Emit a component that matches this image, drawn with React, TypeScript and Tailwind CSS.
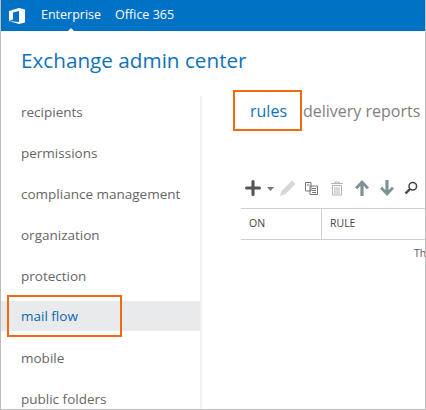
import { Plus } from 'lucide-react';

const navItems = ['recipients', 'permissions', 'compliance management', 'organization', 'protection', 'mail flow', 'mobile', 'public folders'];

function OfficeLogo() {
  return (
    <svg width="16" height="16" viewBox="0 0 16 16" fill="#fff">
      <path d="M0 3 10 0 16 1.5V14.5L10 16 0 13 10 14V3L4 4.5V11.5L0 13Z" />
    </svg>
  );
}

function Toolbar() {
  return (
    <div className="flex h-[20px] items-center pl-[1px]">
      <Plus size={22} strokeWidth={3.4} className="text-[#555]" />
      <svg width="7" height="4" viewBox="0 0 7 4" className="mt-[2px] ml-[3px]" fill="#777">
        <path d="M0 0H7L3.5 4Z" />
      </svg>
      <svg width="18" height="18" viewBox="0 0 18 18" className="ml-[5px]" fill="#d8d8d8">
        <path d="M13 1.5 16.5 5 6 15.5 1 17 2.5 12Z" />
      </svg>
      <svg width="15" height="15" viewBox="0 0 15 15" className="ml-[7px]" fill="none" stroke="#777" strokeWidth="1">
        <path d="M1.5 1.5H7V10H1.5ZM6 5H13.5V13.5H6Z" fill="#fff" />
        <path d="M8 7.5H12M8 9.5H12M8 11.5H12M3 4H5.5" />
      </svg>
      <svg width="14" height="15" viewBox="0 0 14 15" className="ml-[11px]" fill="none" stroke="#b5b5b5" strokeWidth="1">
        <path d="M1 2.5H13M5 2.5V1H9V2.5M2.5 4.5H11.5V14H2.5ZM5 6V13M7 6V13M9 6V13" />
      </svg>
      <svg width="14" height="16" viewBox="0 0 14 16" className="ml-[11px]" fill="#7d9197">
        <path d="M7 0 14 7.5 11.8 9.2 8.6 5.8V16H5.4V5.8L2.2 9.2 0 7.5Z" />
      </svg>
      <svg width="14" height="16" viewBox="0 0 14 16" className="ml-[11px]" fill="#7d9197">
        <path d="M7 16 14 8.5 11.8 6.8 8.6 10.2V0H5.4V10.2L2.2 6.8 0 8.5Z" />
      </svg>
      <svg width="14" height="14" viewBox="0 0 14 14" className="ml-[10px]" fill="none" stroke="#444">
        <circle cx="8.8" cy="5.2" r="3.8" strokeWidth="1.5" />
        <path d="M6 8 1.5 12.5" strokeWidth="2.4" />
      </svg>
    </div>
  );
}

export default function App() {
  return (
    <div className="relative flex h-[410px] w-[426px] flex-col overflow-hidden border-r border-b border-l border-[#bdbdbd] bg-white font-['Open_Sans',sans-serif]">
      <header className="flex h-[31px] shrink-0 items-center bg-[#0072c6] text-[12.5px] text-white">
        <div className="ml-[8px] mr-[16px]"><OfficeLogo /></div>
        <span className="relative">
          Enterprise
          <span className="absolute bottom-[-7px] left-1/2 ml-[-4px] h-0 w-0 border-r-[4px] border-b-[4px] border-l-[4px] border-r-transparent border-b-white border-l-transparent" />
        </span>
        <span className="ml-[14px]">Office 365</span>
      </header>

      <h1 className="mt-[14px] h-[51px] shrink-0 pl-[20px] text-[20.7px] leading-[30px] text-[#0f72ba]">Exchange admin center</h1>

      <div className="flex min-h-0 flex-1">
        <nav className="w-[199px] shrink-0 text-[13.5px] text-[#666]">
          {navItems.map((item) => (
            <div
              key={item}
              className={item === 'mail flow'
                ? 'mb-[11px] flex h-[30px] items-center bg-[#e9eaec] pl-[20px] text-[#0a68ad]'
                : 'mb-[11px] flex h-[30px] items-center pt-[2px] pl-[20px]'}
            >
              {item}
            </div>
          ))}
        </nav>
        <div className="w-[2px] shrink-0 bg-[#f2f2f2]" />

        <main className="min-w-0 flex-1 overflow-hidden pl-[39px]">
          <div className="flex h-[30px] items-center whitespace-nowrap text-[16px]">
            <span className="ml-[9px] text-[#0f72ba]">rules</span>
            <span className="ml-[16px] text-[#7f7f7f]">delivery reports</span>
          </div>
          <div className="mt-[52px]"><Toolbar /></div>
          <div className="mt-[10px] flex h-[32px] items-center border-t border-b border-[#d0d0d0] text-[10.5px] text-[#444]">
            <div className="flex h-full w-[81px] items-center border-r border-[#d0d0d0] pl-[8px]">ON</div>
            <div className="pl-[8px]">RULE</div>
          </div>
          <div className="mt-[6px] pl-[173px] text-[10.5px] text-[#555]">Th</div>
        </main>
      </div>

      <div className="absolute top-[295px] left-[6px] h-[42px] w-[115px] border-[2px] border-[#f26a0f]" />
      <div className="absolute top-[90px] left-[232px] h-[41px] w-[69px] border-[2px] border-[#f26a0f]" />
    </div>
  );
}
